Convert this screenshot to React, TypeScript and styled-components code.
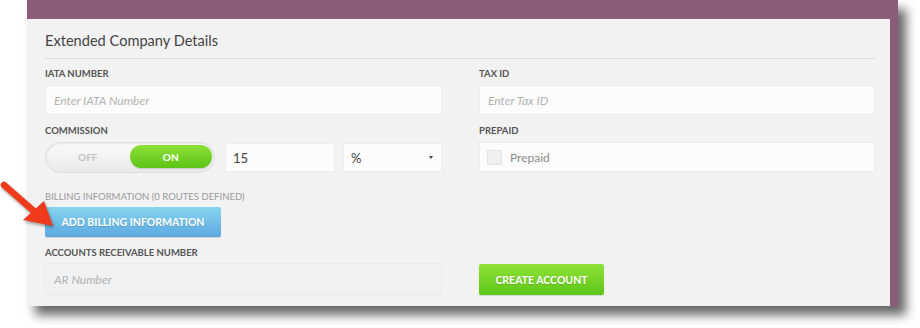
import * as React from "react";
import styled, { createGlobalStyle } from "styled-components";

const GlobalStyle = createGlobalStyle`
  html, body {
    margin: 0;
    padding: 0;
    background: #ffffff;
    font-family: Lato, "Open Sans", sans-serif;
  }
`;

export default function App() {
  return (
    <>
      <GlobalStyle />
      <Page>
        <Frame>
          <Panel>
            <Title>Extended Company Details</Title>
            <Grid>
              <Field>
                <Label>IATA Number</Label>
                <TextInput placeholder="Enter IATA Number" />
              </Field>
              <Field>
                <Label>Tax ID</Label>
                <TextInput placeholder="Enter Tax ID" />
              </Field>

              <Field>
                <Label>Commission</Label>
                <CommissionRow>
                  <Toggle>
                    <ToggleOff>OFF</ToggleOff>
                    <ToggleKnob>ON</ToggleKnob>
                  </Toggle>
                  <ValueBox>15</ValueBox>
                  <SelectBox>
                    <span>%</span>
                    <Caret />
                  </SelectBox>
                </CommissionRow>
              </Field>
              <Field>
                <Label>Prepaid</Label>
                <CheckRow>
                  <CheckBox />
                  <CheckText>Prepaid</CheckText>
                </CheckRow>
              </Field>

              <Field $tight $spaced>
                <Label $muted>Billing Information (0 routes defined)</Label>
                <BlueButton>ADD BILLING INFORMATION</BlueButton>
              </Field>
              <div />

              <Field $tight>
                <Label>Accounts Receivable Number</Label>
                <TextInput $flat placeholder="AR Number" />
              </Field>
              <ButtonCell>
                <GreenButton>CREATE ACCOUNT</GreenButton>
              </ButtonCell>
            </Grid>
          </Panel>
        </Frame>
        <Arrow viewBox="0 0 60 60" width="60" height="60">
          <line x1="4" y1="10" x2="36" y2="38" stroke="#ef3b1c" strokeWidth="6.5" strokeLinecap="round" />
          <polygon points="23,45 44,26 53,51" fill="#ef3b1c" />
        </Arrow>
      </Page>
    </>
  );
}

const Page = styled.div`
  position: relative;
  width: 920px;
  height: 328px;
  padding-left: 27px;
  box-sizing: border-box;
`;

const Frame = styled.div`
  width: 871px;
  background: #8a5c77;
  padding: 19px 8px 0 0;
  box-sizing: border-box;
  box-shadow: 8px 9px 10px rgba(0, 0, 0, 0.6);
`;

const Panel = styled.div`
  background: #f2f2f2;
  height: 287px;
  padding: 0 15px 0 18px;
  box-sizing: border-box;
`;

const Title = styled.h2`
  margin: 0;
  padding: 12px 0 7px;
  font-size: 14.6px;
  line-height: 20px;
  font-weight: 400;
  color: #444;
  border-bottom: 1px solid #dcdcdc;
`;

const Grid = styled.div`
  display: grid;
  grid-template-columns: 397px 396px;
  column-gap: 37px;
  row-gap: 10px;
  padding-top: 9px;
`;

const Field = styled.div<{ $tight?: boolean; $spaced?: boolean }>`
  display: flex;
  flex-direction: column;
  gap: ${(p) => (p.$tight ? "4px" : "5px")};
  margin-top: ${(p) => (p.$spaced ? "8px" : "0")};
`;

const Label = styled.label<{ $muted?: boolean }>`
  font-size: 9.5px;
  line-height: 12px;
  font-weight: ${(p) => (p.$muted ? 400 : 700)};
  text-transform: uppercase;
  color: ${(p) => (p.$muted ? "#999" : "#555")};
`;

const TextInput = styled.input<{ $flat?: boolean }>`
  height: ${(p) => (p.$flat ? "32px" : "30px")};
  box-sizing: border-box;
  border: 1px solid ${(p) => (p.$flat ? "#ebebeb" : "#ececec")};
  background: ${(p) => (p.$flat ? "#f1f1f1" : "#fcfcfc")};
  padding: 0 8px;
  font-family: Lato, sans-serif;
  font-size: 12px;
  color: #444;
  outline: none;
  &::placeholder {
    color: #b2b2b2;
    font-style: italic;
  }
`;

const CommissionRow = styled.div`
  display: flex;
  align-items: center;
  height: 31px;
`;

const Toggle = styled.div`
  width: 170px;
  height: 31px;
  box-sizing: border-box;
  border-radius: 16px;
  border: 1px solid #dedede;
  background: linear-gradient(#fafafa, #e9e9e9);
  box-shadow: inset 0 1px 2px rgba(0, 0, 0, 0.08);
  display: flex;
  align-items: center;
  padding: 0 2px 2px 0;
`;

const ToggleOff = styled.span`
  width: 84px;
  text-align: center;
  font-size: 10px;
  font-weight: 700;
  color: #c4c4c4;
`;

const ToggleKnob = styled.span`
  width: 83px;
  height: 23px;
  border-radius: 12px;
  background: linear-gradient(#8fe036, #5cc417);
  color: #fff;
  font-size: 10px;
  font-weight: 700;
  display: flex;
  align-items: center;
  justify-content: center;
  box-shadow: 0 1px 1px rgba(0, 0, 0, 0.15);
`;

const ValueBox = styled.div`
  margin-left: 10px;
  width: 110px;
  height: 29px;
  box-sizing: border-box;
  background: #fcfcfc;
  border: 1px solid #ececec;
  padding-left: 7px;
  display: flex;
  align-items: center;
  font-size: 13px;
  color: #444;
`;

const SelectBox = styled(ValueBox)`
  margin-left: 8px;
  width: 99px;
  padding-right: 8px;
  justify-content: space-between;
`;

const Caret = styled.span`
  width: 0;
  height: 0;
  border-left: 2.5px solid transparent;
  border-right: 2.5px solid transparent;
  border-top: 3px solid #444;
`;

const CheckRow = styled.div`
  height: 30px;
  box-sizing: border-box;
  background: #fcfcfc;
  border: 1px solid #ececec;
  padding-left: 7px;
  display: flex;
  align-items: center;
  gap: 8px;
`;

const CheckBox = styled.span`
  width: 15px;
  height: 15px;
  box-sizing: border-box;
  background: #f0f0f0;
  border: 1px solid #e3e3e3;
`;

const CheckText = styled.span`
  font-size: 12px;
  color: #8a8a8a;
`;

const Button = styled.button`
  height: 30px;
  border: none;
  border-radius: 2px;
  color: #fff;
  font-family: Lato, sans-serif;
  font-size: 10.5px;
  font-weight: 700;
  text-shadow: 0 1px 1px rgba(0, 0, 0, 0.15);
  padding: 0;
  cursor: pointer;
`;

const BlueButton = styled(Button)`
  width: 176px;
  background: linear-gradient(#86d4ed, #5ca8e1);
  box-shadow: 0 1px 1px rgba(0, 0, 0, 0.15);
`;

const GreenButton = styled(Button)`
  width: 125px;
  height: 31px;
  background: linear-gradient(#90e236, #5cc618);
  box-shadow: 0 1px 1px rgba(0, 0, 0, 0.12);
`;

const ButtonCell = styled.div`
  display: flex;
  align-items: flex-end;
`;

const Arrow = styled.svg`
  position: absolute;
  left: 0;
  top: 175px;
  filter: drop-shadow(1px 2px 1.5px rgba(0, 0, 0, 0.35));
`;
